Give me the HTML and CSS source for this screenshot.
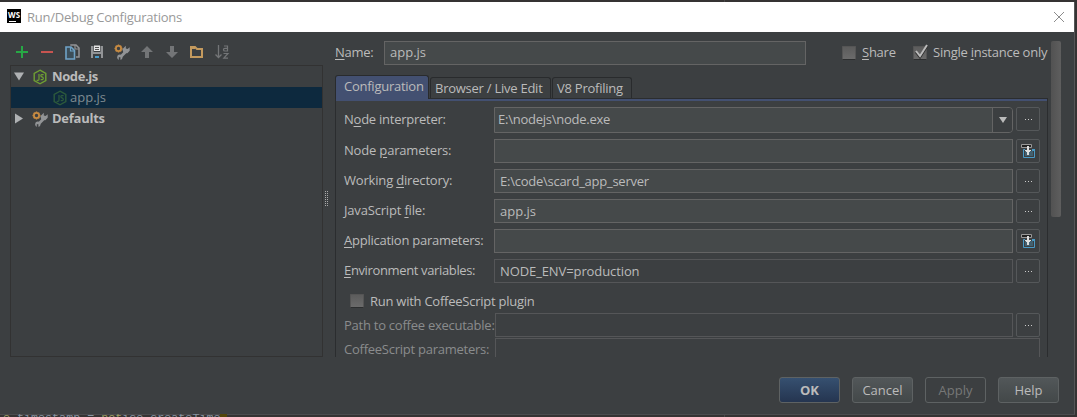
FILE: index.html
```html
<!DOCTYPE html>
<html lang="en">
<head>
<meta charset="utf-8">
<title>Run/Debug Configurations</title>
<link rel="stylesheet" href="styles.css">
</head>
<body>
<svg width="0" height="0" class="defs">
  <symbol id="node" viewBox="0 0 16 16"><path d="M8 1.2 13.8 4.5v7L8 14.8 2.2 11.500V4.500Z" fill="none" stroke="currentColor" stroke-width="1.4"/><path d="M7 5v5.200q0 1.100-1.200 1.100H4.600M11.600 5.600H9.700Q8.800 5.600 8.800 6.600T9.900 7.900 11.300 9.200 10.300 10.700H8.700" fill="none" stroke="currentColor" stroke-width="1.200"/></symbol>
  <symbol id="tools" viewBox="0 0 16 16"><path d="m6 13.500 5.500-5.500" stroke="#929496" stroke-width="2.800"/><path d="M11.800 1.800v2.700l1.800.500 2.100-1.800v3.600L13.400 9.200 9.500 8.800 8.300 5.300Z" fill="#929496"/><circle cx="5.800" cy="13.200" r="2.600" fill="#929496"/><path d="M4.800 16v-2.800h1.600V16" fill="#3c3f41"/><circle cx="4.500" cy="4.500" r="2.600" fill="none" stroke="#c88b42" stroke-width="1.800"/><path d="M4.500.5v1M4.500 7.500v1M.5 4.500h1M7.500 4.500h1M1.700 1.700l.8.800M6.500 6.500l.8.800M7.300 1.700l-.8.800M2.500 6.500l-.8.800" stroke="#c88b42" stroke-width="1.400"/></symbol>
  <symbol id="macro" viewBox="0 0 16 16"><path d="M5 8h8v5H5Z" fill="#43606f"/><path d="M5 6.500H3.500v8h11v-8H12" fill="none" stroke="#4a9bc7"/><path d="M12 6h3v2h-3Z" fill="#4a9bc7"/><path d="M1.500 1.500h10v3h-10Z" fill="#222" stroke="#999"/><path d="M7 3h2v4h2v1h-1v1H9v3H7V9H6V8H5V7h2Z" fill="#dedede"/></symbol>
</svg>
<div class="desktop">
  <div class="dialog">
    <header class="titlebar">
      <svg class="logo" width="14" height="14" viewBox="0 0 14 14"><rect width="14" height="14" fill="#000"/><text x="1" y="8.500" class="logo-text" textLength="12" lengthAdjust="spacingAndGlyphs">WS</text><path d="M2 12.500h7" stroke="#fff"/></svg>
      <span class="title">Run/Debug Configurations</span>
      <svg class="close" width="10" height="10" viewBox="0 0 10 10"><path d="m0 0 10 10M10 0 0 10" stroke="#8c8c8c"/></svg>
    </header>
    <main class="content">
      <section class="sidebar">
        <div class="toolbar">
          <svg viewBox="0 0 16 16"><path d="M8 2v12M2 8h12" stroke="#27a845" stroke-width="2"/></svg>
          <svg viewBox="0 0 16 16"><path d="M2 8h12" stroke="#c75450" stroke-width="2"/></svg>
          <svg viewBox="0 0 16 16"><path d="M7 1.800V1h5l3 3v9h-3" fill="none" stroke="#929496" stroke-width="1.500"/><path d="M11 1v4h4" fill="none" stroke="#929496" stroke-width="1.200"/><path d="M2 3h5l3.500 3.500V15H2Z" fill="#3c4e59" stroke="#6fa3c7" stroke-width="1.600"/><path d="M6.500 3v4H10" fill="none" stroke="#6fa3c7" stroke-width="1.200"/></svg>
          <svg viewBox="0 0 16 16"><path d="M2 2h2.500v6h7V2H14v12H2Z" fill="#929496"/><path d="M5 1.500h6V7H5Z" fill="#e4e4e4"/><path d="M6 3.500h4M6 5.500h4" stroke="#555"/><path d="M4 10h8v4H4Z" fill="#3c3f41"/><path d="M6 12h4v2H6Z" fill="#4a9bc7"/></svg>
          <svg viewBox="0 0 16 16"><use href="#tools"/></svg>
          <svg viewBox="0 0 16 16"><path d="m8 2 6 6h-4v6H6V8H2Z" fill="#737577"/></svg>
          <svg viewBox="0 0 16 16"><path d="m8 14 6-6h-4V2H6v6H2Z" fill="#737577"/></svg>
          <svg viewBox="0 0 16 16"><path d="M2 13V3h4l2 2h5v8Z" fill="none" stroke="#c49a5e" stroke-width="2"/><path d="M2 3h4v2H2Z" fill="#c49a5e"/></svg>
          <svg viewBox="0 0 16 16"><path d="M4.500 1v12M1.500 10.500l3 3 3-3" fill="none" stroke="#737577" stroke-width="1.300"/><path d="M10 2h3.500v5H11q-1.500 0-1.500-1.300T11 4.400h2.500M9.500 9.500H14l-4.200 4.700H14" fill="none" stroke="#737577" stroke-width="1.200"/></svg>
        </div>
        <div class="tree">
          <div class="node"><i class="arrow open"></i><svg class="icon green" viewBox="0 0 16 16"><use href="#node"/></svg><b class="nodejs">Node.js</b></div>
          <div class="node child selected"><svg class="icon dim" viewBox="0 0 16 16"><use href="#node"/></svg><span>app.js</span></div>
          <div class="node"><i class="arrow"></i><svg class="icon" viewBox="0 0 16 16"><use href="#tools"/></svg><b class="defaults">Defaults</b></div>
        </div>
      </section>
      <div class="splitter"><i class="grip"></i></div>
      <section class="editor">
        <div class="name-row">
          <label class="name-label"><u>N</u>ame:</label>
          <div class="field name-field">app.js</div>
          <i class="check share"></i><span class="share-label"><u>S</u>hare</span>
          <i class="check single"><svg width="16" height="16" viewBox="0 0 16 16"><path d="m3 8 4 5 7-11" fill="none" stroke="#2d2d2d" stroke-width="2.500"/><path d="m3 7 4 5 7-11" fill="none" stroke="#bbb" stroke-width="2"/></svg></i><span class="single-label">Single <u>i</u>nstance only</span>
        </div>
        <div class="tabs">
          <div class="tab active"><span>Configuration</span></div>
          <div class="tab live"><span>Browser / Live Edit</span></div>
          <div class="tab v8"><span>V8 Profiling</span></div>
        </div>
        <div class="panel">
          <div class="row first"><label>N<u>o</u>de interpreter:</label><div class="field combo"><span>E:\nodejs\node.exe</span><i class="drop"></i></div><div class="more"><i class="dots"></i></div></div>
          <div class="row"><label class="looser">Node <u>p</u>arameters:</label><div class="field"></div><div class="more"><svg width="16" height="16"><use href="#macro"/></svg></div></div>
          <div class="row"><label class="looser">Working <u>d</u>irectory:</label><div class="field"><span>E:\code\scard_app_server</span></div><div class="more"><i class="dots"></i></div></div>
          <div class="row"><label class="looser">JavaScript <u>f</u>ile:</label><div class="field loose">app.js</div><div class="more"><i class="dots"></i></div></div>
          <div class="row"><label><u>A</u>pplication parameters:</label><div class="field"></div><div class="more"><svg width="16" height="16"><use href="#macro"/></svg></div></div>
          <div class="row"><label class="tight"><u>E</u>nvironment variables:</label><div class="field flat"><span class="env">NODE_ENV=production</span></div><div class="more"><i class="dots"></i></div></div>
          <div class="check-row"><i class="check"></i><span>Run with CoffeeScript plugin</span></div>
          <div class="row off"><label>Path to coffee executable:</label><div class="field flat"></div><div class="more"><i class="dots"></i></div></div>
          <div class="row off last"><label>CoffeeScript parameters:</label><div class="field flat"></div></div>
        </div>
      </section>
      <div class="scroll"><div class="thumb"></div></div>
    </main>
    <footer class="actions">
      <button class="btn ok">OK</button>
      <button class="btn">Cancel</button>
      <button class="btn disabled">Apply</button>
      <button class="btn">Help</button>
    </footer>
  </div>
  <div class="code"><span><em>e.</em>timestamp = <em>not</em>ice.createTime</span><i class="caret"></i></div>
</div>
</body>
</html>
```
FILE: styles.css
```css
* { box-sizing: border-box; }
body { margin: 0; font: 13px/18px "Open Sans", "Noto Sans", sans-serif; color: #bbb; letter-spacing: -0.25px; }
u { text-decoration: underline; text-decoration-thickness: 1px; text-underline-offset: 2px; }
.defs { position: absolute; }
.desktop { width: 1077px; height: 417px; padding-top: 2px; background: linear-gradient(90deg, #353333 724px, #484646 724px 725px, #353333 725px); overflow: hidden; }
.dialog { width: 1075px; height: 413px; display: flex; flex-direction: column; background: #3c3f41; border-right: 1px solid #555657; border-bottom: 1px solid #4b4c4e; }
.titlebar { height: 30px; background: #fff; display: flex; align-items: center; padding: 0 10px 0 7px; color: #999; flex: none; }
.logo { margin-top: -2px; }
.logo-text { font: bold 9px "Open Sans", sans-serif; fill: #fff; letter-spacing: 0; }
.title { margin-left: 6px; }
.close { margin-left: auto; margin-top: -1px; }

.content { display: flex; height: 325px; padding-left: 10px; flex: none; }
.sidebar { width: 313px; display: flex; flex-direction: column; }
.toolbar { height: 33px; display: flex; gap: 9px; padding: 12px 0 0 4px; }
.toolbar svg { width: 16px; height: 16px; }
.tree { flex: 1; border: 1px solid #323232; }
.node { height: 21px; display: flex; align-items: center; padding-left: 3px; }
.node b, .node span { padding-bottom: 1px; }
.node b { margin-left: 3px; }
.nodejs { letter-spacing: -0.4px; }
.icon { width: 16px; height: 16px; margin-left: 8px; margin-right: 1px; flex: none; }
.green { color: #6fa033; }
.dim { color: #2d5a3c; margin-left: 0; }
.child { padding-left: 41px; color: #7f8b91; letter-spacing: 0; }
.child span { margin-left: 1px; }
.selected { background: #0d293e; }
.arrow { width: 10px; height: 12px; background: #afb1b3; clip-path: polygon(1px 1px, 9px 6px, 1px 11px); }
.arrow.open { clip-path: polygon(0 2px, 10px 2px, 5px 10px); }
.splitter { width: 12px; padding: 159px 0 0 1px; }
.grip { display: block; width: 4px; height: 15px; background: conic-gradient(#aaa 25%, transparent 0) 0 0 / 2px 2px; }

.editor { width: 713px; display: flex; flex-direction: column; overflow: hidden; }
.name-row { display: flex; align-items: center; height: 42px; flex: none; }
.name-row > * { flex: none; }
.name-label { width: 49px; padding-bottom: 2px; }
.field { height: 24px; border: 1px solid #646464; background: #45494a; padding-left: 5px; display: flex; align-items: center; flex: 1; white-space: pre; }
.name-field { flex: none; width: 422px; letter-spacing: 0; padding-bottom: 2px; }
.loose { letter-spacing: 0; padding-bottom: 1px; }
.check { display: block; width: 14px; height: 14px; background: linear-gradient(#5c5c5c, #6b6b6b); border: 1px solid #555; border-bottom-color: #2c2e2f; border-radius: 1px; flex: none; }
.check svg { display: block; margin: -3px 0 0 -1px; }
.share { margin-left: 36px; }
.share-label, .single-label { padding-bottom: 2px; }
.share-label { margin-left: 6px; width: 51px; }
.single-label { margin-left: 6px; white-space: nowrap; }

.tabs { height: 24px; display: flex; gap: 1px; align-items: flex-end; flex: none; }
.tab { height: 21px; border: 1px solid #292b2d; border-bottom: 0; border-radius: 3px 3px 0 0; padding-left: 4px; line-height: 21px; white-space: nowrap; }
.active { height: 24px; width: 94px; background: #435071; border-bottom: 0; padding-left: 8px; margin-bottom: -1px; z-index: 1; }
.live { width: 121px; }
.v8 { width: 80px; }
.panel { flex: 1; border: 1px solid #2b2d2f; border-bottom: 0; padding: 0 7px 0 8px; box-shadow: inset 0 2px #435071; overflow: hidden; }
.row { display: flex; height: 24px; margin-bottom: 6px; align-items: center; }
.row label { width: 150px; white-space: nowrap; flex: none; padding-bottom: 2px; }
.looser { letter-spacing: -0.18px; }
.tight { letter-spacing: -0.36px; }
.env { letter-spacing: -0.1px; padding-bottom: 1px; }
.row.first { height: 26px; margin: 8px 0 6px; }
.combo span { padding-bottom: 2px; }
.flat { background: #3c3f41; border-color: #555658; }
.combo { height: 26px; padding-left: 3px; border-radius: 0 4px 4px 0; justify-content: space-between; }
.drop { width: 20px; height: 24px; border-left: 1px solid #646464; background: #3c3f41; display: grid; place-items: center; border-radius: 0 3px 3px 0; }
.drop::before { content: ""; border: 4px solid transparent; border-top: 6px solid #bbb; border-bottom: 0; }
.more { width: 24px; height: 24px; margin-left: 3px; border: 1px solid #55585a; border-radius: 2px; display: grid; place-items: center; }
.first .more { align-self: flex-start; }
.dots { width: 7px; height: 1px; background: repeating-linear-gradient(90deg, #ccc 0 1px, transparent 1px 3px); }
.check-row { height: 24px; padding-left: 6px; display: flex; gap: 6px; align-items: center; }
.check-row .check { margin-top: -1px; }
.row.off { color: #8a8c8d; margin-bottom: 1px; }
.row.off label { width: 151px; }
.row.off:not(.last) label { padding-bottom: 0; }

.scroll { width: 13px; padding: 9px 0 0 3px; }
.thumb { height: 176px; background: linear-gradient(90deg, #525252, #5e5e5e); border-radius: 2px; }
.actions { display: flex; gap: 12px; justify-content: flex-end; padding: 20px 15px 0 0; }
.btn { width: 61px; height: 26px; padding: 0 0 1px; border: 1px solid #5e6263; border-radius: 3px; background: linear-gradient(#525759, #434849); font: 13px "Open Sans", sans-serif; color: #bbb; }
.ok { background: linear-gradient(#365070, #253550); font-weight: bold; }
.disabled { background: none; color: #777; }
.code { display: flex; height: 3px; margin-top: -1px; overflow: hidden; font: 11.7px/14px "Liberation Mono", monospace; letter-spacing: 0; color: #8793a0; padding-left: 3px; position: relative; }
.code span { margin-top: -3px; white-space: pre; }
.code em { font-style: normal; color: #9a9c62; }
.caret { width: 7px; height: 3px; background: #52450a; }
```
